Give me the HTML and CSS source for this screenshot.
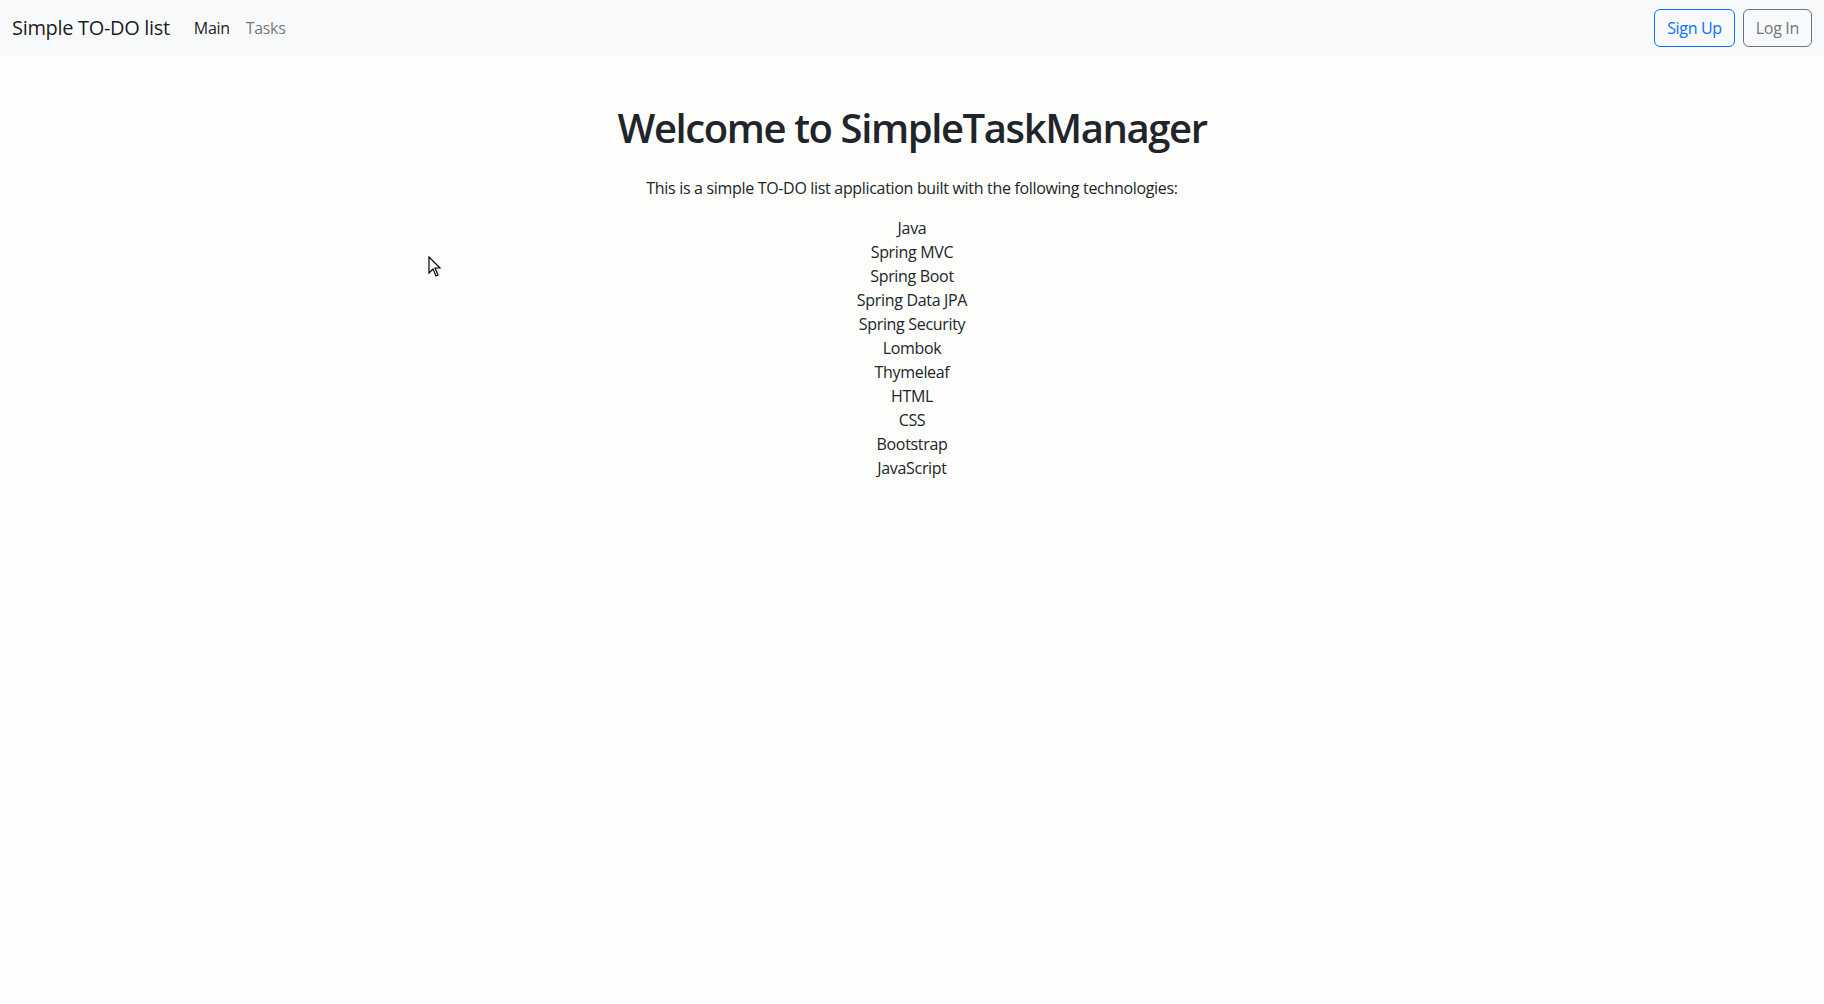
FILE: index.html
```html
<!DOCTYPE html>
<html lang="en">
<head>
<meta charset="utf-8">
<title>Simple TO-DO list</title>
<link rel="stylesheet" href="styles.css">
</head>
<body>
<nav class="navbar">
  <div class="nav-inner">
    <a class="brand" href="#">Simple TO-DO list</a>
    <ul class="nav-links">
      <li><a class="nav-link active" href="#">Main</a></li>
      <li><a class="nav-link" href="#">Tasks</a></li>
    </ul>
    <div class="nav-actions">
      <a class="btn btn-primary-outline" href="#">Sign Up</a>
      <a class="btn btn-secondary-outline" href="#">Log In</a>
    </div>
  </div>
</nav>
<main class="container">
  <h1 class="title">Welcome to SimpleTaskManager</h1>
  <p class="lead-text">This is a simple TO-DO list application built with the following technologies:</p>
  <ul class="tech-list">
    <li>Java</li>
    <li>Spring MVC</li>
    <li>Spring Boot</li>
    <li>Spring Data JPA</li>
    <li>Spring Security</li>
    <li>Lombok</li>
    <li>Thymeleaf</li>
    <li>HTML</li>
    <li>CSS</li>
    <li>Bootstrap</li>
    <li>JavaScript</li>
  </ul>
</main>
<svg class="cursor" width="14" height="22" viewBox="0 0 14 22" aria-hidden="true">
  <path d="M1 1 L1 17 L5 13 L8 20 L10 19 L7 12 L12 12 Z" fill="#fff" stroke="#000" stroke-width="1.2" stroke-linejoin="miter"/>
</svg>
</body>
</html>
```
FILE: styles.css
```css
* { box-sizing: border-box; }
html, body { margin: 0; padding: 0; }
body {
  font-family: "Open Sans", "Noto Sans", "Liberation Sans", sans-serif;
  font-size: 16px;
  line-height: 1.5;
  letter-spacing: -0.02em;
  color: #212529;
  background: #fdfdfc;
  min-height: 1004px;
  position: relative;
}
a { text-decoration: none; }

.navbar {
  background: #f8f9fa;
  padding: 8px 0;
}
.nav-inner {
  display: flex;
  align-items: center;
  padding: 0 12px;
}
.brand {
  font-size: 20px;
  line-height: 30px;
  padding: 5px 0;
  margin-right: 16px;
  color: rgba(0,0,0,0.9);
  white-space: nowrap;
}
.nav-links {
  display: flex;
  list-style: none;
  margin: 0;
  padding: 0;
  flex: 1;
}
.nav-link {
  display: block;
  padding: 8px 8px;
  color: rgba(0,0,0,0.55);
}
.nav-link.active { color: rgba(0,0,0,0.9); }
.nav-actions {
  display: flex;
  gap: 8px;
}
.btn {
  display: inline-block;
  padding: 6px 12px;
  border: 1px solid;
  border-radius: 6px;
  font-size: 16px;
  line-height: 24px;
}
.btn-primary-outline { color: #0d6efd; border-color: #0d6efd; }
.btn-secondary-outline { color: #6c757d; border-color: #6c757d; }

.container {
  max-width: 1320px;
  margin: 48px auto 0;
  padding: 0 12px;
  text-align: center;
}
.title {
  font-size: 40px;
  font-weight: 600;
  line-height: 1.2;
  letter-spacing: -0.035em;
  margin: 0 0 24px;
}
.lead-text {
  margin: 0 0 16px;
}
.tech-list {
  list-style: none;
  margin: 0;
  padding: 0;
}
.cursor {
  position: absolute;
  left: 428px;
  top: 256px;
}
```
